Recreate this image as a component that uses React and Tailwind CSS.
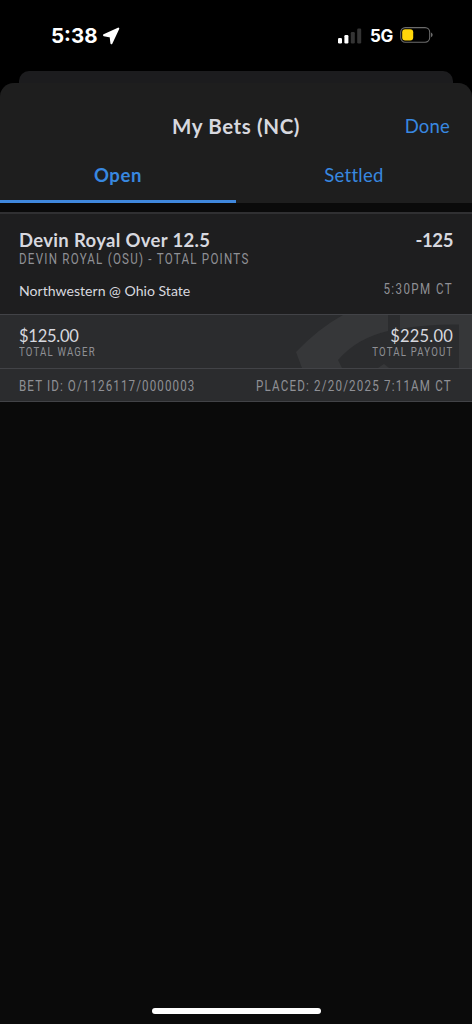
function StatusBar() {
  return (
    <div className="flex h-[71px] items-start justify-between pr-[39px] pl-[51px] font-['Inter',sans-serif] text-white">
      <div className="flex items-center pt-[24px]">
        <span className="w-[51px] text-[20.5px] leading-6 font-bold whitespace-nowrap">5:38</span>
        <svg width="18" height="18" viewBox="0 0 18 18" fill="currentColor" stroke="currentColor" strokeWidth="2" strokeLinejoin="round" aria-hidden="true">
          <path d="M16.300 1.6 2 8.2 8.6 9.400 9.400 16.200Z" />
        </svg>
      </div>
      <div className="flex items-center pt-[24px]">
        <svg className="-mt-px" width="24" height="16" viewBox="0 0 24 16" aria-hidden="true">
          <rect x="0" y="10" width="4" height="5.500" rx="1.2" fill="#fff" />
          <rect x="6.4" y="7" width="4" height="8.500" rx="1.2" fill="#fff" />
          <rect x="12.8" y="4" width="4" height="11.500" rx="1.2" fill="#343434" />
          <rect x="19.2" y=".5" width="4" height="15" rx="1.2" fill="#343434" />
        </svg>
        <span className="ml-[8px] w-[30px] text-[17px] leading-6 font-bold tracking-[-.3px] whitespace-nowrap">5G</span>
        <svg className="-mt-[2px]" width="33" height="16" viewBox="0 0 33 16" aria-hidden="true">
          <rect x=".7" y=".6" width="29" height="14.6" rx="4.6" fill="none" stroke="#6b6b6b" strokeWidth="1.1" />
          <rect x="2.2" y="2.3" width="11" height="11.2" rx="3" fill="#ffd60a" />
          <path d="M31.2 5.6C33 6.5 33 9.3 31.2 10.2Z" fill="#858585" />
        </svg>
      </div>
    </div>
  );
}

function Header() {
  return (
    <header className="grid h-[78px] grid-cols-[1fr_auto_1fr] items-center pt-[8px] pr-[22px]">
      <span />
      <h1 className="pl-[22px] text-[20.5px] font-bold tracking-[.6px] text-[#d7d8df]">My Bets (NC)</h1>
      <button className="justify-self-end pt-[2px] text-[18.5px] tracking-[.2px] text-[#3888e0]">Done</button>
    </header>
  );
}

function Tabs() {
  return (
    <nav className="grid h-[42px] grid-cols-2 text-[18.5px] text-[#3888e0]">
      <button className="border-b-[3px] border-[#3f87dc] pb-[9px] font-bold tracking-[.6px]">Open</button>
      <button className="pb-[12px] tracking-[.3px]">Settled</button>
    </nav>
  );
}

function Watermark() {
  return (
    <svg className="absolute top-0 right-0" width="176" height="53" viewBox="0 0 176 53" aria-hidden="true">
      <path d="M47 0Q23 13 0 37L6 53H46L42 45Q61 23 92 16V0ZM104 0H176V53H163V9.500Q130 9 104 14ZM82 53 88 49 93 53Z" fill="#363739" />
    </svg>
  );
}

function BetCard() {
  return (
    <article className="bg-[#1e1e1f] text-[#d7d8df]">
      <div className="h-[102px] border-t-2 border-[#303032] px-[19px] pt-[15px]">
        <div className="flex h-[24px] items-center justify-between text-[18.5px] font-bold">
          <h2 className="tracking-[.33px]">Devin Royal Over 12.5</h2>
          <span className="tracking-[-.4px]">-125</span>
        </div>
        <p className="-mt-px h-[17px] origin-left scale-x-[.8] font-['Roboto',sans-serif] text-[14.5px] leading-4 tracking-[1.54px] whitespace-nowrap text-[#8f9095]">
          DEVIN ROYAL (OSU) - TOTAL POINTS
        </p>
        <div className="mt-[11px] flex h-[22px] items-center justify-between">
          <span className="text-[14.1px]">Northwestern @ Ohio State</span>
          <span className="origin-right -translate-y-px scale-x-[.8] font-['Roboto',sans-serif] text-[14.5px] tracking-[1.75px] text-[#8f9095]">5:30PM CT</span>
        </div>
      </div>
      <div className="relative h-[54px] border-t border-[#424347] bg-[#2b2c2e] px-[19px] pt-[12px]">
        <Watermark />
        <div className="relative flex justify-between">
          <div>
            <p className="text-[16.500px] leading-[18px] tracking-[-.25px]">$125.00</p>
            <p className="origin-left scale-x-[.8] font-['Roboto',sans-serif] text-[12px] leading-[14px] tracking-[1.5px] text-[#8f9095]">TOTAL WAGER</p>
          </div>
          <div className="text-right">
            <p className="text-[16.500px] leading-[18px] tracking-[.2px]">$225.00</p>
            <p className="origin-right scale-x-[.8] font-['Roboto',sans-serif] text-[12px] leading-[14px] tracking-[1.5px] text-[#8f9095]">TOTAL PAYOUT</p>
          </div>
        </div>
      </div>
      <div className="grid h-[34px] grid-cols-2 items-center border-y border-[#424347] bg-[#2b2c2e] px-[19px] pt-[3px] font-['Roboto',sans-serif] text-[14.5px] text-[#8f9095]">
        <span className="origin-left scale-x-[.8] justify-self-start tracking-[1.38px] whitespace-nowrap">BET ID: O/1126117/0000003</span>
        <span className="mr-px origin-right scale-x-[.8] justify-self-end tracking-[1.48px] whitespace-nowrap">PLACED: 2/20/2025 7:11AM CT</span>
      </div>
    </article>
  );
}

export default function App() {
  return (
    <main className="flex h-[1024px] w-[472px] flex-col overflow-hidden bg-black font-['Lato',sans-serif]">
      <StatusBar />
      <div className="mx-[19px] h-[12px] rounded-t-[10px] bg-[#1c1c1e]" />
      <section className="flex flex-1 flex-col overflow-hidden rounded-t-[14px] bg-[#0a0a0a]">
        <div className="bg-[#1e1e1e]">
          <Header />
          <Tabs />
        </div>
        <div className="h-[9px]" />
        <BetCard />
        <div className="mx-auto mt-auto mb-[10px] h-[6px] w-[169px] rounded-full bg-white" />
      </section>
    </main>
  );
}
